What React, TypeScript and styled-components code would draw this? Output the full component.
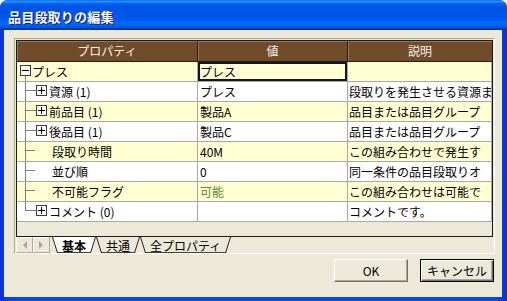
import React from 'react';
import styled, { createGlobalStyle } from 'styled-components';

const GlobalStyle = createGlobalStyle`
  html, body { margin: 0; padding: 0; background: #ffffff; }
  body { font-family: "Noto Sans CJK JP", "Noto Sans", sans-serif; font-size: 12px; color: #000; }
  * { box-sizing: border-box; }
`;

const Window = styled.div`
  width: 507px;
  height: 301px;
  display: flex;
  flex-direction: column;
  background: linear-gradient(to right, #0831D9 0%, #0A48DE 2%, #0A48DE 98%, #0831D9 100%);
  border-radius: 8px 8px 0 0;
  overflow: hidden;
`;

const TitleBar = styled.div`
  height: 30px;
  flex: none;
  display: flex;
  align-items: center;
  padding: 2px 0 0 8px;
  background: linear-gradient(
    to bottom,
    #0058EE 0%, #3593FF 4%, #288EFF 6%, #127DFF 8%, #036FFC 10%,
    #0262EE 14%, #0057E5 20%, #0054E3 24%, #0055EB 56%, #005BF5 66%,
    #026AFE 76%, #0062EF 86%, #0052D6 92%, #0040AB 96%, #003092 100%
  );
`;

const TitleText = styled.span`
  color: #ffffff;
  font-weight: 700;
  font-size: 13px;
  letter-spacing: 0.2px;
  text-shadow: 1px 1px 0 #0F1089;
`;

const Client = styled.div`
  flex: 1;
  margin: 0 5px 4px 4px;
  background: #ECE9D8;
  padding: 8px 7px 0 10px;
  display: flex;
  flex-direction: column;
`;

const Panel = styled.div`
  height: 216px;
  border: 1px solid;
  border-color: #ACA899 #FFFFFF #FFFFFF #ACA899;
  padding: 1px 1px 0 1px;
  display: flex;
  flex-direction: column;
`;

const GridFrame = styled.div`
  height: 197px;
  border: 1px solid #1A1A1A;
  background: #ECE9D8;
  display: flex;
  flex-direction: column;
`;

const GridRow = styled.div<{ $bg?: string }>`
  display: grid;
  grid-template-columns: 181px 150px 1fr;
  background: ${p => p.$bg || 'transparent'};
`;

const HeaderCell = styled.div<{ $last?: boolean }>`
  height: 21px;
  line-height: 20px;
  text-align: center;
  color: #F6F2EA;
  background: #714C2A;
  border-bottom: 1px solid #2A1A0A;
  border-right: ${p => (p.$last ? 'none' : '1px solid #2A1A0A')};
  box-shadow: inset 1px 1px 0 #9C7A58;
  white-space: nowrap;
  overflow: hidden;
`;

const Cell = styled.div<{ $selected?: boolean; $color?: string; $pad?: number }>`
  height: 20px;
  line-height: 19px;
  padding-left: ${p => (p.$pad ?? 2)}px;
  border-bottom: 1px solid #A8A8A8;
  border-right: 1px solid #A8A8A8;
  color: ${p => p.$color || '#000'};
  white-space: nowrap;
  overflow: hidden;
  box-shadow: ${p => (p.$selected ? 'inset 0 0 0 2px #15152A' : 'none')};
`;

const TreeCell = styled.div`
  height: 20px;
  display: flex;
  align-items: flex-start;
  border-bottom: 1px solid #A8A8A8;
  border-right: 1px solid #A8A8A8;
  white-space: nowrap;
  overflow: hidden;
`;

const TreeLabel = styled.span`
  line-height: 19px;
`;

const Gutter = styled.svg`
  flex: none;
  display: block;
`;

const TabStrip = styled.div`
  height: 16px;
  display: flex;
  align-items: stretch;
`;

const ArrowButton = styled.div`
  width: 17px;
  height: 16px;
  display: flex;
  align-items: center;
  justify-content: center;
  background: #ECE9D8;
  border: 1px solid;
  border-color: #FFFFFF #ACA899 #ACA899 #FFFFFF;
`;

const Tabs = styled.div`
  display: flex;
  margin-left: 2px;
`;

const Tab = styled.div<{ $active?: boolean }>`
  position: relative;
  height: 16px;
  padding: 0 10px;
  display: flex;
  align-items: center;
  font-weight: ${p => (p.$active ? 700 : 400)};
  isolation: isolate;
`;

const TabFill = styled.span<{ $active?: boolean }>`
  position: absolute;
  inset: 0;
  z-index: -1;
  background: ${p => (p.$active ? '#FFFFFF' : '#ECE9D8')};
  clip-path: polygon(0 0, 100% 0, calc(100% - 5px) 100%, 5px 100%);
`;

const TabBottom = styled.span`
  position: absolute;
  left: 5px;
  right: 5px;
  bottom: 0;
  height: 1px;
  background: #404040;
`;

const TabEdge = styled.svg<{ $side: 'left' | 'right' }>`
  position: absolute;
  top: 0;
  ${p => (p.$side === 'left' ? 'left: 0;' : 'right: 0;')}
`;

const TabLabel = styled.span`
  line-height: 15px;
`;

const ButtonRow = styled.div`
  margin-top: 5px;
  display: flex;
  justify-content: flex-end;
  gap: 12px;
  padding-right: 1px;
`;

const Button = styled.button<{ $default?: boolean }>`
  width: 74px;
  height: 23px;
  padding: 0;
  font-family: "Noto Sans CJK JP", "Noto Sans", sans-serif;
  font-size: 12px;
  color: #000;
  background: #ECE9D8;
  border: 1px solid;
  border-color: ${p => (p.$default ? '#000000' : '#FFFFFF #716F64 #716F64 #FFFFFF')};
  box-shadow: ${p =>
    p.$default
      ? 'inset 1px 1px 0 #FFFFFF, inset -1px -1px 0 #716F64, inset -2px -2px 0 #ACA899'
      : 'inset -1px -1px 0 #ACA899'};
`;

type Kind = 'root' | 'branch' | 'leaf' | 'last';

const TreeIcon: React.FC<{ kind: Kind }> = ({ kind }) => {
  const line = '#808080';
  const box = '#3C3C3C';
  if (kind === 'root') {
    return (
      <Gutter width={15} height={19}>
        <line x1={8.5} y1={14} x2={8.5} y2={19} stroke={line} />
        <rect x={3.5} y={3.5} width={10} height={10} fill="#fff" stroke={box} />
        <line x1={5} y1={8.5} x2={12} y2={8.5} stroke="#000" />
      </Gutter>
    );
  }
  if (kind === 'leaf') {
    return (
      <Gutter width={35} height={19}>
        <line x1={8.5} y1={0} x2={8.5} y2={19} stroke={line} />
        <line x1={8.5} y1={8.5} x2={18} y2={8.5} stroke={line} />
      </Gutter>
    );
  }
  return (
    <Gutter width={32} height={19}>
      <line x1={8.5} y1={0} x2={8.5} y2={kind === 'last' ? 9 : 19} stroke={line} />
      <line x1={8.5} y1={8.5} x2={19} y2={8.5} stroke={line} />
      <rect x={19.5} y={3.5} width={10} height={10} fill="#fff" stroke={box} />
      <line x1={21} y1={8.5} x2={28} y2={8.5} stroke="#000" />
      <line x1={24.5} y1={5} x2={24.5} y2={12} stroke="#000" />
    </Gutter>
  );
};

type Row = {
  kind: Kind;
  label: string;
  value: string;
  desc: string;
  selected?: boolean;
  valueColor?: string;
};

const rows: Row[] = [
  { kind: 'root', label: 'プレス', value: 'プレス', desc: '', selected: true },
  { kind: 'branch', label: '資源 (1)', value: 'プレス', desc: '段取りを発生させる資源ま' },
  { kind: 'branch', label: '前品目 (1)', value: '製品A', desc: '品目または品目グループ' },
  { kind: 'branch', label: '後品目 (1)', value: '製品C', desc: '品目または品目グループ' },
  { kind: 'leaf', label: '段取り時間', value: '40M', desc: 'この組み合わせで発生す' },
  { kind: 'leaf', label: '並び順', value: '0', desc: '同一条件の品目段取りオ' },
  { kind: 'leaf', label: '不可能フラグ', value: '可能', desc: 'この組み合わせは可能で', valueColor: '#5E8C31' },
  { kind: 'last', label: 'コメント (0)', value: '', desc: 'コメントです。' },
];

const Arrow: React.FC<{ dir: 'left' | 'right' }> = ({ dir }) => (
  <svg width={5} height={8}>
    {dir === 'left' ? (
      <polygon points="5,0 5,8 1,4" fill="#ACA899" />
    ) : (
      <polygon points="0,0 0,8 4,4" fill="#ACA899" />
    )}
  </svg>
);

const SheetTab: React.FC<{ label: string; active?: boolean }> = ({ label, active }) => (
  <Tab $active={active}>
    <TabFill $active={active} />
    <TabBottom />
    <TabEdge $side="left" width={6} height={16}>
      <line x1={0.5} y1={0} x2={5.5} y2={16} stroke="#202020" />
    </TabEdge>
    <TabEdge $side="right" width={6} height={16}>
      <line x1={5.5} y1={0} x2={0.5} y2={16} stroke="#202020" />
    </TabEdge>
    <TabLabel>{label}</TabLabel>
  </Tab>
);

export default function App() {
  return (
    <>
      <GlobalStyle />
      <Window>
        <TitleBar>
          <TitleText>品目段取りの編集</TitleText>
        </TitleBar>
        <Client>
          <Panel>
            <GridFrame>
              <GridRow>
                <HeaderCell>プロパティ</HeaderCell>
                <HeaderCell>値</HeaderCell>
                <HeaderCell $last>説明</HeaderCell>
              </GridRow>
              {rows.map((r, i) => (
                <GridRow key={i} $bg={i % 2 === 0 ? '#FFFFD2' : '#FFFFFF'}>
                  <TreeCell>
                    <TreeIcon kind={r.kind} />
                    <TreeLabel>{r.label}</TreeLabel>
                  </TreeCell>
                  <Cell $selected={r.selected} $color={r.valueColor}>{r.value}</Cell>
                  <Cell $pad={1}>{r.desc}</Cell>
                </GridRow>
              ))}
            </GridFrame>
            <TabStrip>
              <ArrowButton><Arrow dir="left" /></ArrowButton>
              <ArrowButton><Arrow dir="right" /></ArrowButton>
              <Tabs>
                <SheetTab label="基本" active />
                <SheetTab label="共通" />
                <SheetTab label="全プロパティ" />
              </Tabs>
            </TabStrip>
          </Panel>
          <ButtonRow>
            <Button>OK</Button>
            <Button $default>キャンセル</Button>
          </ButtonRow>
        </Client>
      </Window>
    </>
  );
}
